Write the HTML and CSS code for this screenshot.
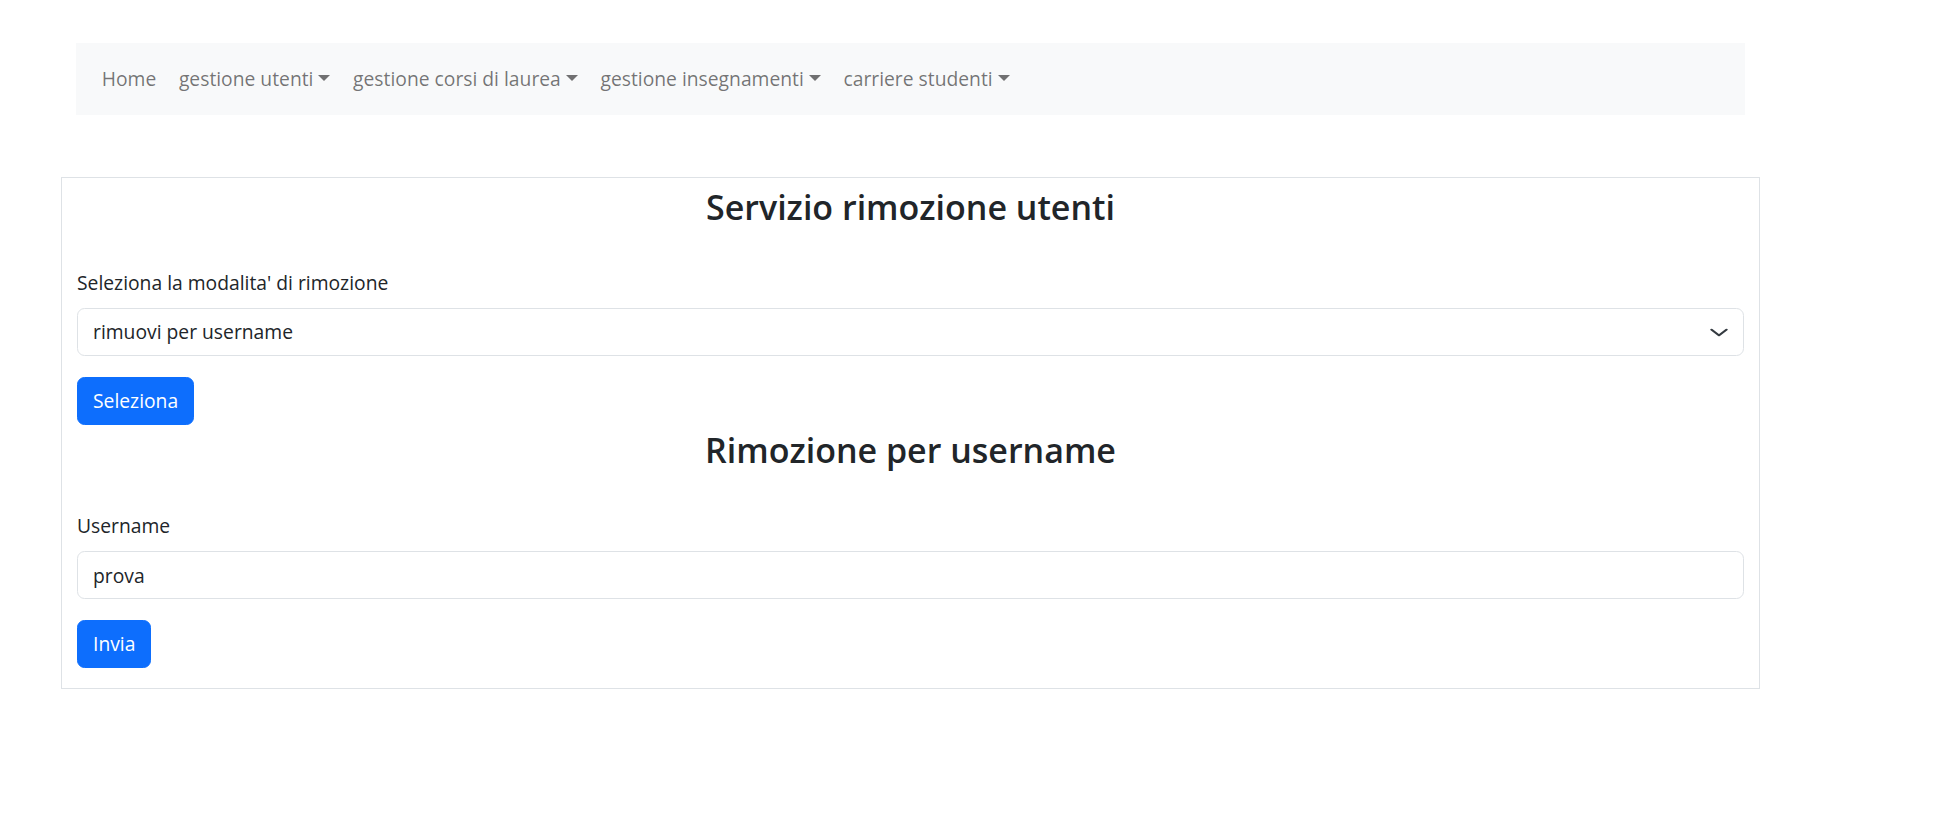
FILE: index.html
```html
<!DOCTYPE html>
<html lang="it">
<head>
<meta charset="utf-8">
<title>Servizio rimozione utenti</title>
<link rel="stylesheet" href="styles.css">
</head>
<body>
<div class="page">
  <nav class="navbar">
    <ul class="nav-list">
      <li><a class="nav-link" href="#">Home</a></li>
      <li><a class="nav-link" href="#">gestione utenti<span class="caret"></span></a></li>
      <li><a class="nav-link" href="#">gestione corsi di laurea<span class="caret"></span></a></li>
      <li><a class="nav-link" href="#">gestione insegnamenti<span class="caret"></span></a></li>
      <li><a class="nav-link" href="#">carriere studenti<span class="caret"></span></a></li>
    </ul>
  </nav>

  <main class="card">
    <h2 class="title">Servizio rimozione utenti</h2>
    <form class="form">
      <label class="form-label">Seleziona la modalita' di rimozione</label>
      <div class="form-select">
        <span>rimuovi per username</span>
        <svg class="chevron" viewBox="0 0 16 16" width="20" height="15" preserveAspectRatio="none"><path fill="none" stroke="#343a40" stroke-linecap="round" stroke-linejoin="round" stroke-width="2" d="m2 5 6 6 6-6"/></svg>
      </div>
      <div class="actions"><button type="button" class="btn">Seleziona</button></div>
    </form>

    <h2 class="title title-sub">Rimozione per username</h2>
    <form class="form">
      <label class="form-label" for="username">Username</label>
      <input class="form-control" id="username" type="text" value="prova">
      <div class="actions"><button type="button" class="btn">Invia</button></div>
    </form>
  </main>
</div>
</body>
</html>
```

FILE: styles.css
```css
* {
  box-sizing: border-box;
}

html, body {
  margin: 0;
  padding: 0;
  background: #ffffff;
}

body {
  font-family: "Open Sans", "Noto Sans", "Liberation Sans", sans-serif;
  font-size: 19.3px;
  line-height: 30px;
  color: #212529;
}

.page {
  padding-top: 43px;
}

.navbar {
  margin-left: 76px;
  width: 1669px;
  height: 72px;
  background: #f8f9fa;
  display: flex;
  align-items: center;
  padding: 0 14.5px;
}

.nav-list {
  list-style: none;
  margin: 0;
  padding: 0;
  display: flex;
  align-items: center;
}

.nav-link {
  display: block;
  padding: 0 11.3px;
  color: rgba(0, 0, 0, 0.55);
  text-decoration: none;
  white-space: nowrap;
}

.caret {
  display: inline-block;
  margin-left: 5px;
  vertical-align: 0.255em;
  border-top: 6px solid;
  border-left: 6px solid transparent;
  border-right: 6px solid transparent;
  border-bottom: 0;
}

.card {
  display: block;
  margin-top: 62px;
  margin-left: 61px;
  width: 1699px;
  border: 1px solid #dee2e6;
  padding: 5px 15px 20px;
}

.title {
  margin: 0 0 37px;
  font-size: 34px;
  line-height: 48px;
  font-weight: 600;
  text-align: center;
  color: #212529;
}

.title-sub {
  margin-top: 1px;
}

.form {
  margin: 0;
}

.form-label {
  display: block;
  margin-bottom: 10px;
}

.form-select,
.form-control {
  display: flex;
  align-items: center;
  justify-content: space-between;
  width: 100%;
  height: 48px;
  padding: 8px 15px;
  border: 1px solid #dee2e6;
  border-radius: 7.5px;
  background: #ffffff;
  font-family: inherit;
  font-size: 19.3px;
  line-height: 30px;
  color: #212529;
  margin-bottom: 21px;
}

.form-control {
  display: block;
  outline: none;
}

.chevron {
  flex: none;
  margin-right: -1px;
}

.actions {
  display: flex;
}

.btn {
  height: 48px;
  padding: 8px 15px;
  border: 1px solid #0d6efd;
  border-radius: 7.5px;
  background: #0d6efd;
  color: #ffffff;
  font-family: inherit;
  font-size: 19.3px;
  line-height: 30px;
  cursor: pointer;
}
```
